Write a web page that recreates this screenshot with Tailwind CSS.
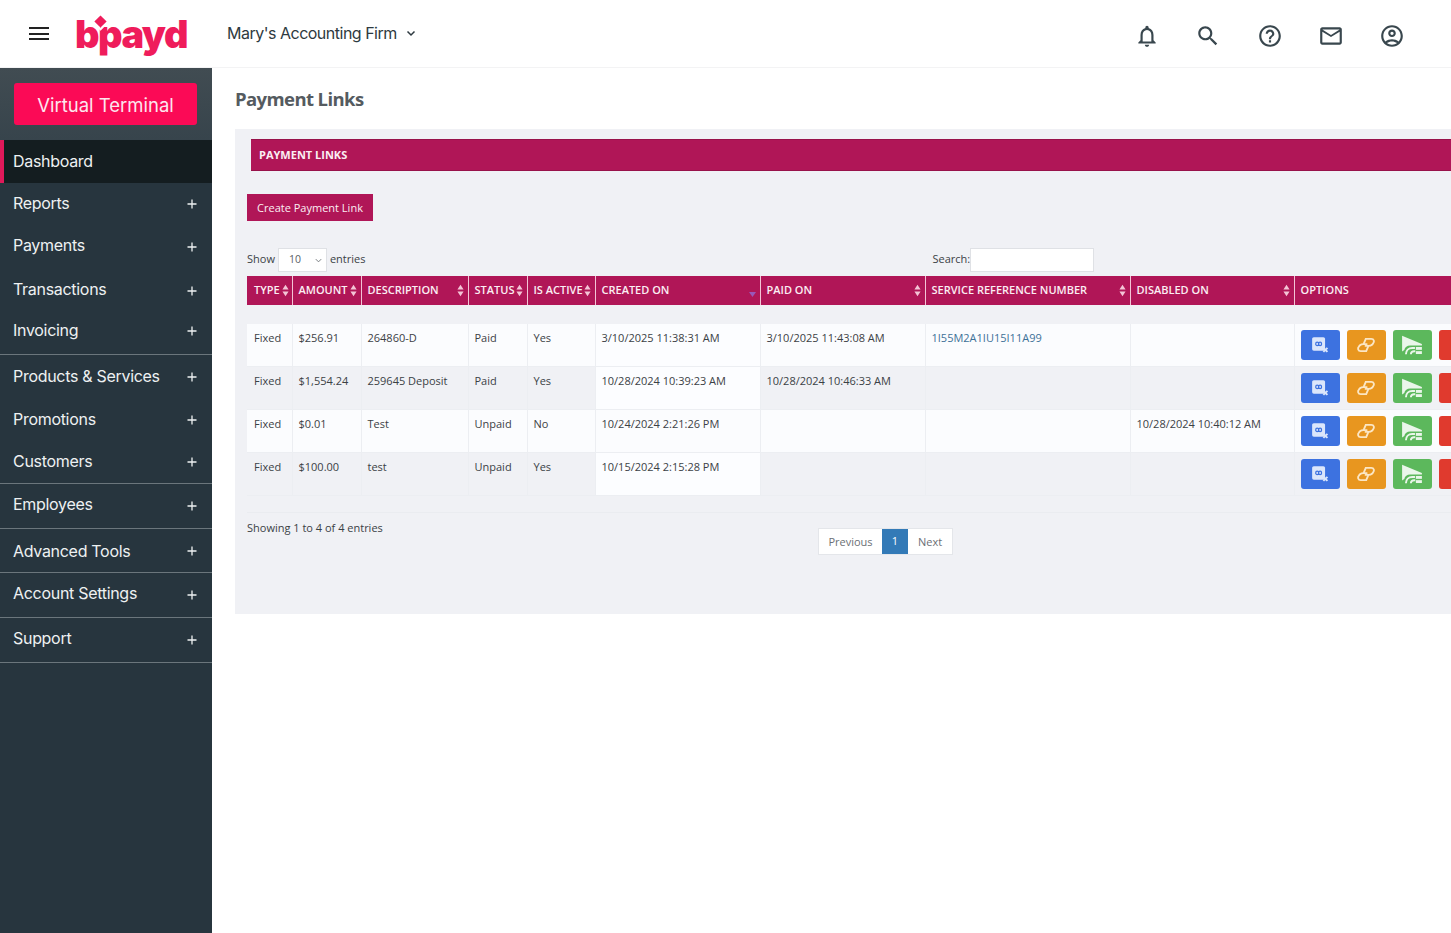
<!DOCTYPE html>
<html lang="en">
<head>
<meta charset="UTF-8">
<title>Payment Links</title>
<script src="https://cdn.jsdelivr.net/npm/@tailwindcss/browser@4"></script>
</head>
<body class="h-[933px] w-[1451px] overflow-hidden bg-white font-['Inter',sans-serif]">

<svg class="hidden">
  <symbol id="sort" viewBox="0 0 8 14"><path d="M4 0.5 7.5 5.8H.5zM4 13.5 .5 8.2H7.5z" fill="#f3c4d6"/></symbol>
  <symbol id="plus" viewBox="0 0 10 10"><path d="M5 .5v9M.5 5h9" stroke="#eef1f2" stroke-width="1.3" fill="none"/></symbol>
  <symbol id="view" viewBox="0 0 16 16"><rect x="1" y="1" width="11.5" height="12" rx="1.5" fill="#dbe6fb"/><path d="M4.2 7c0-2 2.6-2 2.6 0s2.6 2 2.6 0-2.6-2-2.6 0-2.6 2-2.6 0z" fill="none" stroke="#3d72e0" stroke-width="1.1"/><path d="M11 10.5l3.6 3.6M14.6 10.5 11 14.1" stroke="#dbe6fb" stroke-width="1.7"/></symbol>
  <symbol id="chain" viewBox="0 0 18 16"><g fill="none" stroke="#fbe6c4" stroke-width="1.7" stroke-linecap="round"><path d="M7 6.800 8.800 2.500h5c2.400 0 3 2.600 1.600 4l-1 1.300c-.9.8-2 1-3.200 1H8.600"/><path d="M11 9.200 9.200 13.500h-5c-2.400 0-3-2.600-1.600-4l1-1.300c.9-.8 2-1 3.200-1h2.800"/></g></symbol>
  <symbol id="share" viewBox="0 0 20 18"><path d="M1 .5 19 8.200v1.300H8.300C5.500 9.500 3.600 11 3 13.500L1 15z" fill="#eaf6ea"/><path d="M4.500 17.500c0-3.400 2.500-5.700 5.700-5.700h2.500" fill="none" stroke="#eaf6ea" stroke-width="1.800"/><path d="M9 17.500c0-1.700 1.200-2.900 3-2.900h1" fill="none" stroke="#eaf6ea" stroke-width="1.800"/><rect x="13.500" y="10.800" width="5.500" height="2.600" fill="#eaf6ea"/><rect x="13.500" y="14.600" width="5.500" height="2.600" fill="#eaf6ea"/></symbol>
</svg>

<header class="flex h-[68px] items-center border-b border-[#f3f3f4] bg-white">
  <div class="ml-[29px] flex w-5 flex-col gap-[3.500px]">
    <span class="h-[2px] bg-[#222]"></span><span class="h-[2px] bg-[#222]"></span><span class="h-[2px] bg-[#222]"></span>
  </div>
  <div class="relative ml-[26px] w-[112px] text-[38px] leading-none font-black tracking-[-1.500px] text-[#ef1c5b] font-['Inter',sans-serif]">
    bpayd
    <span class="absolute top-[2px] left-[21px] size-[9px] rotate-45 bg-[#ef1c5b] outline-2 outline-white"></span>
  </div>
  <div class="ml-[40px] flex items-center pb-[2px] text-[16px] tracking-[-0.500px] text-[#2e3a40]">
    Mary's Accounting Firm
    <svg class="ml-[8px] size-[12px]" viewBox="0 0 12 12"><path d="M2.500 4.500 6 8l3.500-3.500" fill="none" stroke="#2e3a40" stroke-width="1.500"/></svg>
  </div>
  <div class="ml-auto mr-[46px] flex items-center gap-[35.200px] pt-[5px] text-[#39474e]">
    <svg class="size-[26px]" viewBox="0 0 24 24" fill="currentColor"><path d="M12 22c1.100 0 2-.9 2-2h-4c0 1.100.9 2 2 2zm6-6v-5c0-3.070-1.630-5.640-4.500-6.320V4c0-.83-.67-1.500-1.500-1.500s-1.500.67-1.500 1.500v.68C7.640 5.360 6 7.920 6 11v5l-2 2v1h16v-1l-2-2zm-2 1H8v-6c0-2.480 1.510-4.500 4-4.500s4 2.020 4 4.500v6z"/></svg>
    <svg class="size-[26px]" viewBox="0 0 24 24" fill="currentColor"><path d="M15.500 14h-.79l-.28-.27C15.410 12.590 16 11.110 16 9.500 16 5.910 13.090 3 9.500 3S3 5.910 3 9.500 5.910 16 9.500 16c1.610 0 3.090-.59 4.230-1.570l.27.28v.79l5 4.990L20.490 19l-4.990-5zm-6 0C7.010 14 5 11.990 5 9.500S7.010 5 9.500 5 14 7.010 14 9.500 11.990 14 9.500 14z"/></svg>
    <svg class="size-[26px]" viewBox="0 0 24 24" fill="currentColor"><path d="M11 18h2v-2h-2v2zm1-16C6.480 2 2 6.480 2 12s4.480 10 10 10 10-4.480 10-10S17.520 2 12 2zm0 18c-4.410 0-8-3.590-8-8s3.590-8 8-8 8 3.590 8 8-3.590 8-8 8zm0-14c-2.210 0-4 1.790-4 4h2c0-1.100.9-2 2-2s2 .9 2 2c0 2-3 1.750-3 5h2c0-2.250 3-2.500 3-5 0-2.210-1.790-4-4-4z"/></svg>
    <svg class="size-[26px]" viewBox="0 0 24 24" fill="currentColor"><path d="M20 4H4c-1.100 0-1.990.9-1.990 2L2 18c0 1.100.9 2 2 2h16c1.100 0 2-.9 2-2V6c0-1.100-.9-2-2-2zm0 14H4V8l8 5 8-5v10zm-8-7L4 6h16l-8 5z"/></svg>
    <svg class="size-[26px]" viewBox="0 0 24 24" fill="currentColor"><path d="M12 2C6.480 2 2 6.480 2 12s4.480 10 10 10 10-4.480 10-10S17.520 2 12 2zM7.350 18.500C8.660 17.560 10.260 17 12 17s3.340.56 4.650 1.500c-1.310.94-2.910 1.500-4.650 1.500s-3.340-.56-4.650-1.500zm10.790-1.380C16.450 15.800 14.320 15 12 15s-4.450.8-6.140 2.120C4.700 15.730 4 13.950 4 12c0-4.420 3.580-8 8-8s8 3.580 8 8c0 1.950-.7 3.730-1.860 5.120zM12 6c-1.930 0-3.500 1.570-3.500 3.500S10.070 13 12 13s3.500-1.570 3.500-3.500S13.930 6 12 6zm0 5c-.83 0-1.500-.67-1.500-1.500S11.170 8 12 8s1.500.67 1.500 1.500S12.830 11 12 11z"/></svg>
  </div>
</header>

<div class="flex h-[865px]">
  <aside class="w-[212px] shrink-0 bg-[#27353e] text-[16px] tracking-[-0.300px] text-[#eef1f2]">
    <div class="flex h-[72px] items-start bg-[linear-gradient(#414c52,#37444c)] px-[14px] pt-[15px]">
      <div class="flex h-[42px] w-[183px] items-center justify-center rounded-[3px] bg-[#fb0a56] pt-[3px] text-[18.500px] tracking-normal text-[#fde6ee]">Virtual Terminal</div>
    </div>
    <div class="flex h-[43px] items-center border-l-[4px] border-[#e0195a] bg-[#141d20] pb-[2px] pl-[9px]">Dashboard</div>
    <nav>
      <div class="flex h-[41px] items-center justify-between pr-[15px] pl-[13px]"><span class="-mt-[2px]">Reports</span><svg class="size-[10px]"><use href="#plus"/></svg></div>
      <div class="flex h-[43px] items-center justify-between pr-[15px] pl-[13px]"><span class="-mt-[2px]">Payments</span><svg class="mt-[3px] size-[10px]"><use href="#plus"/></svg></div>
      <div class="flex h-[45px] items-center justify-between pt-[3px] pr-[15px] pl-[13px]"><span class="-mt-[4px]">Transactions</span><svg class="size-[10px]"><use href="#plus"/></svg></div>
      <div class="flex h-[43px] items-center justify-between border-b border-[#6b767c] pr-[15px] pb-[4px] pl-[13px]"><span class="-mt-[2px]">Invoicing</span><svg class="size-[10px]"><use href="#plus"/></svg></div>
      <div class="flex h-[44px] items-center justify-between pr-[15px] pl-[13px]"><span class="-mt-[2px]">Products &amp; Services</span><svg class="size-[10px]"><use href="#plus"/></svg></div>
      <div class="flex h-[42px] items-center justify-between pr-[15px] pl-[13px]"><span class="-mt-[2px]">Promotions</span><svg class="size-[10px]"><use href="#plus"/></svg></div>
      <div class="flex h-[43px] items-center justify-between border-b border-[#6b767c] pr-[15px] pl-[13px]"><span class="-mt-[2px]">Customers</span><svg class="size-[10px]"><use href="#plus"/></svg></div>
      <div class="flex h-[45px] items-center justify-between border-b border-[#6b767c] pr-[15px] pl-[13px]"><span class="-mt-[4px]">Employees</span><svg class="size-[10px]"><use href="#plus"/></svg></div>
      <div class="flex h-[44px] items-center justify-between border-b border-[#6b767c] pr-[15px] pl-[13px]"><span>Advanced Tools</span><svg class="size-[10px]"><use href="#plus"/></svg></div>
      <div class="flex h-[45px] items-center justify-between border-b border-[#6b767c] pr-[15px] pl-[13px]"><span class="-mt-[4px]">Account Settings</span><svg class="size-[10px]"><use href="#plus"/></svg></div>
      <div class="flex h-[45px] items-center justify-between border-b border-[#6b767c] pr-[15px] pl-[13px]"><span class="-mt-[4px]">Support</span><svg class="size-[10px]"><use href="#plus"/></svg></div>
    </nav>
  </aside>

  <main class="min-w-0 flex-1 overflow-hidden pl-[23px] font-['Open_Sans',sans-serif] text-[#3b4145]">
    <h1 class="flex h-[61px] items-center text-[18.500px] font-bold tracking-[-0.600px] text-[#555b60]">Payment Links</h1>
    <section class="h-[485px] w-[1400px] bg-[#f0f1f5] px-[12px] pt-[10px] text-[11px]">
      <div class="ml-[4px] flex h-[32px] items-center border-y border-[#98124a] bg-[#b01657] pl-[8px] text-[11px] font-bold text-[#fbeef3]">PAYMENT LINKS</div>
      <button class="mt-[23px] block h-[27px] w-[126px] bg-[#b01657] pt-[1px] text-center text-[11px] text-[#fbeef3]">Create Payment Link</button>
      <div class="mt-[26px] flex h-[29px] items-center pt-[1px] pb-[4px]">
        <span class="-mt-[2px]">Show</span>
        <span class="ml-[3px] flex h-[24px] w-[49px] items-center justify-between border border-[#dfe1e5] bg-white pr-[3px] pl-[10px] text-[10.500px] text-[#5a6065]">10<svg class="size-[9px]" viewBox="0 0 10 10"><path d="M2 3.500 5 6.500 8 3.500" fill="none" stroke="#6b7075" stroke-width="1"/></svg></span>
        <span class="-mt-[2px] ml-[3px]">entries</span>
        <span class="-mt-[2px] ml-[567px]">Search:</span>
        <span class="h-[24px] w-[124px] border border-[#dfe1e5] bg-white"></span>
      </div>

      <table class="w-[1248px] table-fixed border-separate border-spacing-0">
        <colgroup>
          <col class="w-[46px]"><col class="w-[69px]"><col class="w-[107px]"><col class="w-[59px]"><col class="w-[68px]"><col class="w-[165px]"><col class="w-[165px]"><col class="w-[205px]"><col class="w-[164px]"><col class="w-[200px]">
        </colgroup>
        <thead class="bg-[#b01657] text-left text-[11px] whitespace-nowrap text-[#fbeef3]">
          <tr class="h-[29px]">
            <th class="border-r border-[#f3c4d6] pl-[7px] font-semibold"><div class="flex items-center justify-between pr-[3px]">TYPE<svg class="h-[13px] w-[7px]"><use href="#sort"/></svg></div></th>
            <th class="border-r border-[#f3c4d6] pl-[5.500px] font-semibold"><div class="flex items-center justify-between pr-[4px]">AMOUNT<svg class="h-[13px] w-[7px]"><use href="#sort"/></svg></div></th>
            <th class="border-r border-[#f3c4d6] pl-[5.500px] font-semibold"><div class="flex items-center justify-between pr-[4px]">DESCRIPTION<svg class="h-[13px] w-[7px]"><use href="#sort"/></svg></div></th>
            <th class="border-r border-[#f3c4d6] pl-[5.500px] font-semibold"><div class="flex items-center justify-between pr-[4px]">STATUS<svg class="h-[13px] w-[7px]"><use href="#sort"/></svg></div></th>
            <th class="border-r border-[#f3c4d6] pl-[5.500px] font-semibold"><div class="flex items-center justify-between pr-[4px]">IS ACTIVE<svg class="h-[13px] w-[7px]"><use href="#sort"/></svg></div></th>
            <th class="border-r border-[#f3c4d6] pl-[5.500px] font-semibold"><div class="flex items-center justify-between pr-[4px]">CREATED ON<svg class="mt-[7px] h-[5px] w-[7px]" viewBox="0 0 7 5"><path d="M0 0H7L3.500 5z" fill="#9a57b8"/></svg></div></th>
            <th class="border-r border-[#f3c4d6] pl-[5.500px] font-semibold"><div class="flex items-center justify-between pr-[4px]">PAID ON<svg class="h-[13px] w-[7px]"><use href="#sort"/></svg></div></th>
            <th class="border-r border-[#f3c4d6] pl-[5.500px] font-semibold"><div class="flex items-center justify-between pr-[4px]">SERVICE REFERENCE NUMBER<svg class="h-[13px] w-[7px]"><use href="#sort"/></svg></div></th>
            <th class="border-r border-[#f3c4d6] pl-[5.500px] font-semibold"><div class="flex items-center justify-between pr-[4px]">DISABLED ON<svg class="h-[13px] w-[7px]"><use href="#sort"/></svg></div></th>
            <th class="pl-[5.500px] font-semibold">OPTIONS</th>
          </tr>
          <tr class="h-[19px] bg-[#f0f1f5]"><td colspan="10"></td></tr>
        </thead>
        <tbody class="align-top [&_td]:border-r [&_td]:border-b [&_td]:border-[#eceef2] [&_td]:pt-[6px] [&_td]:pl-[5.500px] [&_td:first-child]:pl-[7px]">
          <tr class="h-[43px] bg-[#fbfcfe]">
            <td>Fixed</td><td>$256.91</td><td>264860-D</td><td>Paid</td><td>Yes</td><td class="bg-[#fcfdff]">3/10/2025 11:38:31 AM</td><td>3/10/2025 11:43:08 AM</td><td class="text-[#3d7198]">1I55M2A1IU15I11A99</td><td></td>
            <td><div class="flex gap-[7px]">
              <span class="flex h-[30px] w-[39px] items-center justify-center rounded-[3px] bg-[#3d72e0]"><svg class="size-[18px]"><use href="#view"/></svg></span>
              <span class="flex h-[30px] w-[39px] items-center justify-center rounded-[3px] bg-[#e8961f]"><svg class="h-[18px] w-[20px]"><use href="#chain"/></svg></span>
              <span class="flex h-[30px] w-[39px] items-center justify-center rounded-[3px] bg-[#5cb85c]"><svg class="h-[20px] w-[22px]"><use href="#share"/></svg></span>
              <span class="h-[30px] w-[39px] rounded-[3px] bg-[#e03a2e]"></span>
            </div></td>
          </tr>
          <tr class="h-[43px] bg-[#f0f1f5]">
            <td>Fixed</td><td>$1,554.24</td><td>259645 Deposit</td><td>Paid</td><td>Yes</td><td class="bg-[#fcfdff]">10/28/2024 10:39:23 AM</td><td>10/28/2024 10:46:33 AM</td><td></td><td></td>
            <td><div class="flex gap-[7px]">
              <span class="flex h-[30px] w-[39px] items-center justify-center rounded-[3px] bg-[#3d72e0]"><svg class="size-[18px]"><use href="#view"/></svg></span>
              <span class="flex h-[30px] w-[39px] items-center justify-center rounded-[3px] bg-[#e8961f]"><svg class="h-[18px] w-[20px]"><use href="#chain"/></svg></span>
              <span class="flex h-[30px] w-[39px] items-center justify-center rounded-[3px] bg-[#5cb85c]"><svg class="h-[20px] w-[22px]"><use href="#share"/></svg></span>
              <span class="h-[30px] w-[39px] rounded-[3px] bg-[#e03a2e]"></span>
            </div></td>
          </tr>
          <tr class="h-[43px] bg-[#fbfcfe]">
            <td>Fixed</td><td>$0.01</td><td>Test</td><td>Unpaid</td><td>No</td><td>10/24/2024 2:21:26 PM</td><td></td><td></td><td>10/28/2024 10:40:12 AM</td>
            <td><div class="flex gap-[7px]">
              <span class="flex h-[30px] w-[39px] items-center justify-center rounded-[3px] bg-[#3d72e0]"><svg class="size-[18px]"><use href="#view"/></svg></span>
              <span class="flex h-[30px] w-[39px] items-center justify-center rounded-[3px] bg-[#e8961f]"><svg class="h-[18px] w-[20px]"><use href="#chain"/></svg></span>
              <span class="flex h-[30px] w-[39px] items-center justify-center rounded-[3px] bg-[#5cb85c]"><svg class="h-[20px] w-[22px]"><use href="#share"/></svg></span>
              <span class="h-[30px] w-[39px] rounded-[3px] bg-[#e03a2e]"></span>
            </div></td>
          </tr>
          <tr class="h-[43px] bg-[#f0f1f5]">
            <td>Fixed</td><td>$100.00</td><td>test</td><td>Unpaid</td><td>Yes</td><td class="bg-[#fcfdff]">10/15/2024 2:15:28 PM</td><td></td><td></td><td></td>
            <td><div class="flex gap-[7px]">
              <span class="flex h-[30px] w-[39px] items-center justify-center rounded-[3px] bg-[#3d72e0]"><svg class="size-[18px]"><use href="#view"/></svg></span>
              <span class="flex h-[30px] w-[39px] items-center justify-center rounded-[3px] bg-[#e8961f]"><svg class="h-[18px] w-[20px]"><use href="#chain"/></svg></span>
              <span class="flex h-[30px] w-[39px] items-center justify-center rounded-[3px] bg-[#5cb85c]"><svg class="h-[20px] w-[22px]"><use href="#share"/></svg></span>
              <span class="h-[30px] w-[39px] rounded-[3px] bg-[#e03a2e]"></span>
            </div></td>
          </tr>
        </tbody>
      </table>

      <div class="mt-[16px] flex border-t border-[#eaecf0] pt-[7px]">
        <span class="w-[571px]">Showing 1 to 4 of 4 entries</span>
        <div class="mt-[8px] flex h-[27px] border border-[#e4e6ea] bg-white pt-[1px] text-[#6b7075]">
          <span class="flex w-[63px] items-center justify-center">Previous</span>
          <span class="-mt-[1px] flex w-[26px] items-center justify-center bg-[#337ab7] text-white">1</span>
          <span class="flex w-[44px] items-center justify-center">Next</span>
        </div>
      </div>
    </section>
  </main>
</div>
</body>
</html>
